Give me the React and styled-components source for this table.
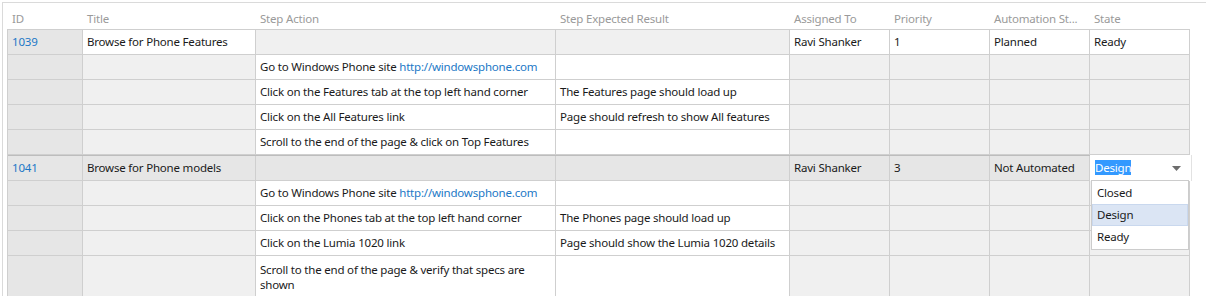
import React from "react";
import styled, { createGlobalStyle } from "styled-components";

const GlobalStyle = createGlobalStyle`
  html, body {
    margin: 0;
    padding: 0;
    background: #ffffff;
  }
  body {
    font-family: "Segoe UI", "Noto Sans", "Open Sans", sans-serif;
    font-size: 11.5px;
    letter-spacing: -0.2px;
    color: #1a1a1a;
  }
`;

const COLUMNS = "75px 173px 300px 234px 100px 100px 100px 100px";

const Frame = styled.div`
  margin: 2px 0 0 2px;
  border-top: 1px solid #dadada;
  border-left: 1px solid #dadada;
  padding-left: 4px;
  height: 294px;
  overflow: hidden;
  box-sizing: border-box;
`;

const HeaderRow = styled.div`
  display: grid;
  grid-template-columns: ${COLUMNS};
  height: 26px;
`;

const HeaderCell = styled.div`
  padding: 8px 0 0 5px;
  line-height: 15px;
  color: #9a9a9a;
  white-space: nowrap;
  overflow: hidden;
`;

const Grid = styled.div`
  width: 1182px;
  border-top: 1px solid #cfcfcf;
  border-left: 1px solid #cfcfcf;
`;

const Row = styled.div`
  display: grid;
  grid-template-columns: ${COLUMNS};
  border-top: ${(p) => (p.$groupStart ? "1px solid #bdbdbd" : "none")};
`;

const toneColors = {
  id: "#e6e6e6",
  blank: "#f0f0f0",
  edit: "#ffffff",
  selected: "#e6e6e6",
};

const Cell = styled.div`
  position: relative;
  box-sizing: border-box;
  min-height: 25px;
  padding: ${(p) => (p.$multi ? "6px 12px 4px 4px" : "0 4px 2px 4px")};
  display: flex;
  align-items: ${(p) => (p.$multi ? "flex-start" : "center")};
  line-height: 15px;
  background: ${(p) => toneColors[p.$tone] || "#ffffff"};
  border-right: 1px solid #cfcfcf;
  border-bottom: 1px solid #cfcfcf;
  white-space: ${(p) => (p.$multi ? "normal" : "nowrap")};
`;

const Link = styled.a`
  color: #1c78c6;
  text-decoration: none;
  cursor: pointer;
`;

const SelectBox = styled.div`
  position: absolute;
  top: -1px;
  left: 0;
  right: -3px;
  bottom: -1px;
  background: #ffffff;
  border-right: 1px solid #e2e2e2;
  display: flex;
  align-items: center;
  padding: 0 0 2px 5px;
  z-index: 2;
`;

const SelectedText = styled.span`
  background: #3399ff;
  color: #ffffff;
  line-height: 15px;
`;

const Caret = styled.svg`
  position: absolute;
  right: 10px;
  top: 11px;
`;

const Menu = styled.ul`
  position: absolute;
  top: 100%;
  left: 1px;
  width: 98px;
  margin: 0;
  padding: 1px 0;
  list-style: none;
  background: #ffffff;
  border: 1px solid #cccccc;
  box-sizing: border-box;
  z-index: 3;
`;

const MenuItem = styled.li`
  height: 22px;
  padding-left: 4px;
  box-sizing: border-box;
  background: ${(p) => (p.$active ? "#dbe5f4" : "transparent")};
  border: 1px solid ${(p) => (p.$active ? "#c9d8ee" : "transparent")};
  line-height: 19px;
`;

const headers = [
  "ID",
  "Title",
  "Step Action",
  "Step Expected Result",
  "Assigned To",
  "Priority",
  "Automation St...",
  "State",
];

const siteStep = (
  <span>
    Go to Windows Phone site <Link>http://windowsphone.com</Link>
  </span>
);

const testCases = [
  {
    id: "1039",
    title: "Browse for Phone Features",
    assigned: "Ravi Shanker",
    priority: "1",
    automation: "Planned",
    state: "Ready",
    steps: [
      { action: siteStep, expected: "" },
      {
        action: "Click on the Features tab at the top left hand corner",
        expected: "The Features page should load up",
      },
      {
        action: "Click on the All Features link",
        expected: "Page should refresh to show All features",
      },
      {
        action: "Scroll to the end of the page & click on Top Features",
        expected: "",
      },
    ],
  },
  {
    id: "1041",
    title: "Browse for Phone models",
    assigned: "Ravi Shanker",
    priority: "3",
    automation: "Not Automated",
    state: "Design",
    editing: true,
    steps: [
      { action: siteStep, expected: "" },
      {
        action: "Click on the Phones tab at the top left hand corner",
        expected: "The Phones page should load up",
      },
      {
        action: "Click on the Lumia 1020 link",
        expected: "Page should show the Lumia 1020 details",
      },
      {
        action: "Scroll to the end of the page & verify that specs are shown",
        expected: "",
        multi: true,
      },
    ],
  },
];

const stateOptions = ["Closed", "Design", "Ready"];

function StateEditor({ value }) {
  return (
    <>
      <SelectBox>
        <SelectedText>{value}</SelectedText>
        <Caret width="9" height="5" viewBox="0 0 9 5">
          <path d="M0 0 L9 0 L4.5 5 Z" fill="#6d6d6d" />
        </Caret>
      </SelectBox>
      <Menu>
        {stateOptions.map((o) => (
          <MenuItem key={o} $active={o === value}>
            {o}
          </MenuItem>
        ))}
      </Menu>
    </>
  );
}

function CaseRows({ tc, groupStart }) {
  const parentTone = tc.editing ? "selected" : "edit";
  return (
    <>
      <Row $groupStart={groupStart}>
        <Cell $tone="id">
          <Link>{tc.id}</Link>
        </Cell>
        <Cell $tone={parentTone}>{tc.title}</Cell>
        <Cell $tone={tc.editing ? "selected" : "blank"} />
        <Cell $tone={tc.editing ? "selected" : "blank"} />
        <Cell $tone={parentTone}>{tc.assigned}</Cell>
        <Cell $tone={parentTone}>{tc.priority}</Cell>
        <Cell $tone={parentTone}>{tc.automation}</Cell>
        <Cell $tone={parentTone}>
          {tc.editing ? <StateEditor value={tc.state} /> : tc.state}
        </Cell>
      </Row>
      {tc.steps.map((s, i) => (
        <Row key={i}>
          <Cell $tone="id" />
          <Cell $tone="blank" />
          <Cell $tone="edit" $multi={s.multi}>
            {s.action}
          </Cell>
          <Cell $tone="edit" $multi={s.multi}>
            {s.expected}
          </Cell>
          <Cell $tone="blank" />
          <Cell $tone="blank" />
          <Cell $tone="blank" />
          <Cell $tone="blank" />
        </Row>
      ))}
    </>
  );
}

export default function App() {
  return (
    <>
      <GlobalStyle />
      <Frame>
        <HeaderRow>
          {headers.map((h) => (
            <HeaderCell key={h}>{h}</HeaderCell>
          ))}
        </HeaderRow>
        <Grid>
          {testCases.map((tc, i) => (
            <CaseRows key={tc.id} tc={tc} groupStart={i > 0} />
          ))}
        </Grid>
      </Frame>
    </>
  );
}
